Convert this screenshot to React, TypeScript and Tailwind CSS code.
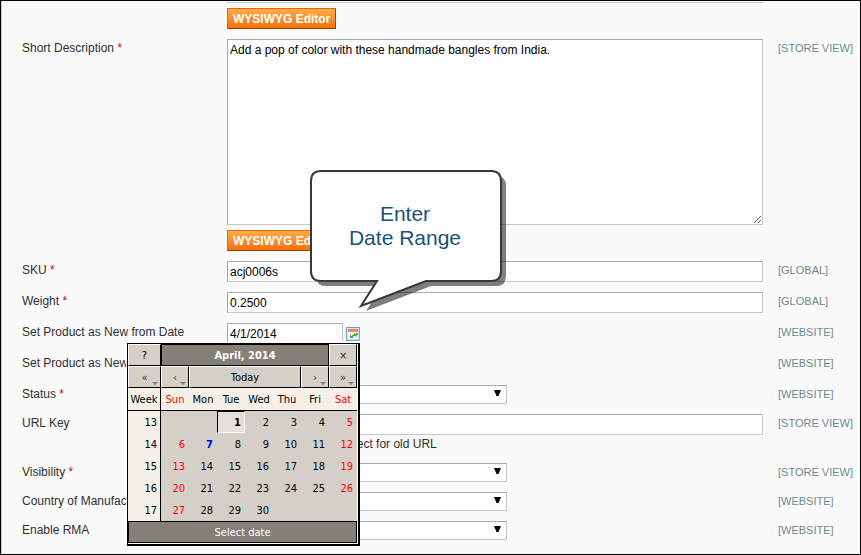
import type { ReactNode } from "react";

const control =
  "block rounded-none border border-[#c8c8c8] border-t-[#aaa] border-l-[#aaa] bg-white px-[2px] text-[12px] text-black outline-none";

function Row({
  label,
  id,
  required,
  scope,
  children,
}: {
  label: string;
  id: string;
  required?: boolean;
  scope: string;
  children: ReactNode;
}) {
  return (
    <div className="flex">
      <label htmlFor={id} className="w-[205px] shrink-0 whitespace-nowrap leading-[18px]">
        {label}
        {required && <span className="text-[#d40707]"> *</span>}
      </label>
      <div className="relative min-w-0 flex-1">{children}</div>
      <span className="w-[97px] shrink-0 pl-[15px] text-[11px] leading-[18px] whitespace-nowrap text-[#6f8992]">
        [{scope}]
      </span>
    </div>
  );
}

function TextField({ id, value = "" }: { id: string; value?: string }) {
  return <input id={id} type="text" defaultValue={value} className={`${control} h-[21px] w-full`} />;
}

function SelectField({ id, options }: { id: string; options: string[] }) {
  return (
    <div className="relative w-[280px]">
      <select id={id} className={`${control} h-[19px] w-full appearance-none`}>
        {options.map((o) => (
          <option key={o}>{o}</option>
        ))}
      </select>
      <svg className="pointer-events-none absolute top-[5px] right-[6px]" width="7" height="6" viewBox="0 0 7 6">
        <path d="M0 0h7L4.5 6h-2z" fill="#000" />
      </svg>
    </div>
  );
}

function EditorButton() {
  return (
    <button
      type="button"
      className="mt-[5px] block h-[21px] border border-[#ed6502] border-r-[#a04300] border-b-[#a04300] bg-linear-to-b from-[#ffac47] to-[#f56f06] px-[5px] text-[12px] leading-[18px] font-bold whitespace-nowrap text-white"
    >
      WYSIWYG Editor
    </button>
  );
}

function DateField({ id, value = "" }: { id: string; value?: string }) {
  return (
    <div className="flex gap-[3px]">
      <input id={id} type="text" defaultValue={value} className={`${control} h-[21px] w-[116px]`} />
      <button type="button" aria-label="Select date" className="mt-[4px] h-[14px] w-[14px]">
        <svg width="14" height="14" viewBox="0 0 14 14">
          <rect x="0.5" y="0.5" width="13" height="13" fill="#d5e5f8" stroke="#6d9bdc" />
          <rect x="2" y="2" width="10" height="10" fill="#fff" />
          <rect x="2" y="2" width="10" height="3" fill="#f5874a" />
          <path d="M2 7.5h10M2 9.5h10M4.5 5v7M7.5 5v7M10.5 5v7" stroke="#c3cfdf" strokeWidth="0.7" />
          <path d="M8 6h1v1h1v-1h2v2h-1v1h-3zM4 8h1v1h1v-1h2v1h-1v2h-3z" fill="#5aa648" />
          <path d="M10 14l4-4v4z" fill="#8fb6e8" />
        </svg>
      </button>
    </div>
  );
}

const raised =
  "block h-[22px] w-full border border-t-white border-l-white border-r-black border-b-black bg-[#d4d0c8] pt-[2px]";

function NavButton({ name, glyph }: { name: string; glyph: string }) {
  return (
    <button type="button" aria-label={name} className={`${raised} relative text-[#123c40]`}>
      {glyph}
      <svg className="absolute right-[2px] bottom-[2px]" width="6" height="3" viewBox="0 0 6 3">
        <path d="M0 0h6L3 3z" fill="#848078" />
      </svg>
    </button>
  );
}

const weekdays = ["Sun", "Mon", "Tue", "Wed", "Thu", "Fri", "Sat"];
const weeks = [13, 14, 15, 16, 17];

function dayStyle(day: number, column: number) {
  if (day === 1)
    return "border border-t-black border-l-black border-r-white border-b-white bg-[#e4e0d8] pr-[3px] font-bold";
  if (day === 7) return "pr-[4px] font-bold text-[#0000ff]";
  return column === 0 || column === 6 ? "pr-[4px] text-[#ff0000]" : "pr-[4px]";
}

function Calendar() {
  return (
    <div className="absolute top-[20px] left-[-100px] z-10 border-t border-r-2 border-b-2 border-l border-black font-['DejaVu_Sans_Condensed','Noto_Sans',sans-serif] text-[11px] leading-[18px] text-black shadow-[-1px_-1px_0_#fff]">
      <div className="border-r border-b border-white">
        <table className="w-[229px] table-fixed border-separate border-spacing-0 bg-[#d4d0c8]">
          <colgroup>
            <col className="w-[33px]" />
            {weekdays.map((d) => (
              <col key={d} className="w-[28px]" />
            ))}
          </colgroup>
          <thead>
            <tr>
              <td>
                <button type="button" className={raised}>
                  ?
                </button>
              </td>
              <th
                colSpan={6}
                className="h-[22px] border border-black bg-[#848078] pt-[2px] text-center font-bold text-white"
              >
                April, 2014
              </th>
              <td>
                <button type="button" aria-label="Close" className={`${raised} text-[#123c40]`}>
                  ×
                </button>
              </td>
            </tr>
            <tr>
              <td>
                <NavButton name="Previous year" glyph="«" />
              </td>
              <td>
                <NavButton name="Previous month" glyph="‹" />
              </td>
              <td colSpan={4}>
                <button type="button" className={raised}>
                  Today
                </button>
              </td>
              <td>
                <NavButton name="Next month" glyph="›" />
              </td>
              <td>
                <NavButton name="Next year" glyph="»" />
              </td>
            </tr>
            <tr className="bg-[#f4f0e8]">
              <th className="h-[23px] border-r border-b border-black pt-[2px] text-center font-normal">Week</th>
              {weekdays.map((d, i) => (
                <th
                  key={d}
                  className={`border-b border-black pt-[2px] text-center font-normal ${i === 0 || i === 6 ? "text-[#ff0000]" : ""}`}
                >
                  {d}
                </th>
              ))}
            </tr>
          </thead>
          <tbody>
            {weeks.map((week, w) => (
              <tr key={week}>
                <td className="h-[22px] border-r border-black bg-[#f4f0e8] pt-[2px] pr-[3px] text-right">{week}</td>
                {weekdays.map((d, i) => {
                  const day = w * 7 + i - 1;
                  const inMonth = day > 0 && day <= 30;
                  return (
                    <td key={d} className={`pt-[2px] text-right ${inMonth ? dayStyle(day, i) : ""}`}>
                      {inMonth ? day : ""}
                    </td>
                  );
                })}
              </tr>
            ))}
          </tbody>
          <tfoot>
            <tr>
              <td
                colSpan={8}
                className="h-[22px] border border-black bg-[#848078] pt-[2px] text-center text-white"
              >
                Select date
              </td>
            </tr>
          </tfoot>
        </table>
      </div>
    </div>
  );
}

function Callout() {
  return (
    <div className="absolute top-[131px] left-[83px] z-20 h-[142px] w-[198px]">
      <svg className="absolute inset-0" width="198" height="142" viewBox="0 0 198 142">
        <path
          d="M11 1H181Q191 1 191 11V101Q191 111 181 111H116L51 136L67 111H11Q1 111 1 101V11Q1 1 11 1Z"
          transform="translate(5 5)"
          fill="#000"
          fillOpacity="0.5"
        />
        <path
          d="M11 1H181Q191 1 191 11V101Q191 111 181 111H116L51 136L67 111H11Q1 111 1 101V11Q1 1 11 1Z"
          fill="#fff"
          stroke="#383838"
          strokeWidth="2"
        />
      </svg>
      <p className="relative flex h-[112px] w-[190px] items-center justify-center text-center text-[21px] leading-[24px] text-[#1a5276]">
        Enter
        <br />
        Date Range
      </p>
    </div>
  );
}

export default function App() {
  return (
    <main className="min-h-screen border border-black bg-[#fafafa] font-['Liberation_Sans',Arial,sans-serif] text-[12px] text-[#2f2f2f]">
      <form className="flex flex-col gap-[10px] border-l border-[#ccc] pb-[13px] pl-[20px]">
        <div className="pr-[97px] pl-[205px]">
          <div className="h-[2px] border-x border-b border-[#c8c8c8] bg-white" />
          <EditorButton />
        </div>
        <Row label="Short Description" id="short" required scope="STORE VIEW">
          <textarea
            id="short"
            defaultValue="Add a pop of color with these handmade bangles from India."
            className={`${control} h-[186px] w-full resize-y py-[3px] leading-[15px]`}
          />
          <EditorButton />
          <Callout />
        </Row>
        <Row label="SKU" id="sku" required scope="GLOBAL">
          <TextField id="sku" value="acj0006s" />
        </Row>
        <Row label="Weight" id="weight" required scope="GLOBAL">
          <TextField id="weight" value="0.2500" />
        </Row>
        <Row label="Set Product as New from Date" id="from" scope="WEBSITE">
          <DateField id="from" value="4/1/2014" />
          <Calendar />
        </Row>
        <Row label="Set Product as New to Date" id="to" scope="WEBSITE">
          <DateField id="to" />
        </Row>
        <Row label="Status" id="status" required scope="WEBSITE">
          <SelectField id="status" options={["Enabled", "Disabled"]} />
        </Row>
        <Row label="URL Key" id="url" scope="STORE VIEW">
          <TextField id="url" />
          <div className="flex h-[18px] items-center gap-[4px]">
            <input id="redirect" type="checkbox" className="h-[13px] w-[13px]" />
            <label htmlFor="redirect" className="leading-[18px]">
              Create Custom Redirect for old URL
            </label>
          </div>
        </Row>
        <Row label="Visibility" id="visibility" required scope="STORE VIEW">
          <SelectField id="visibility" options={["Catalog, Search", "Catalog", "Search"]} />
        </Row>
        <Row label="Country of Manufacture" id="country" scope="WEBSITE">
          <SelectField id="country" options={["India"]} />
        </Row>
        <Row label="Enable RMA" id="rma" scope="WEBSITE">
          <SelectField id="rma" options={["Yes", "No"]} />
        </Row>
      </form>
    </main>
  );
}
